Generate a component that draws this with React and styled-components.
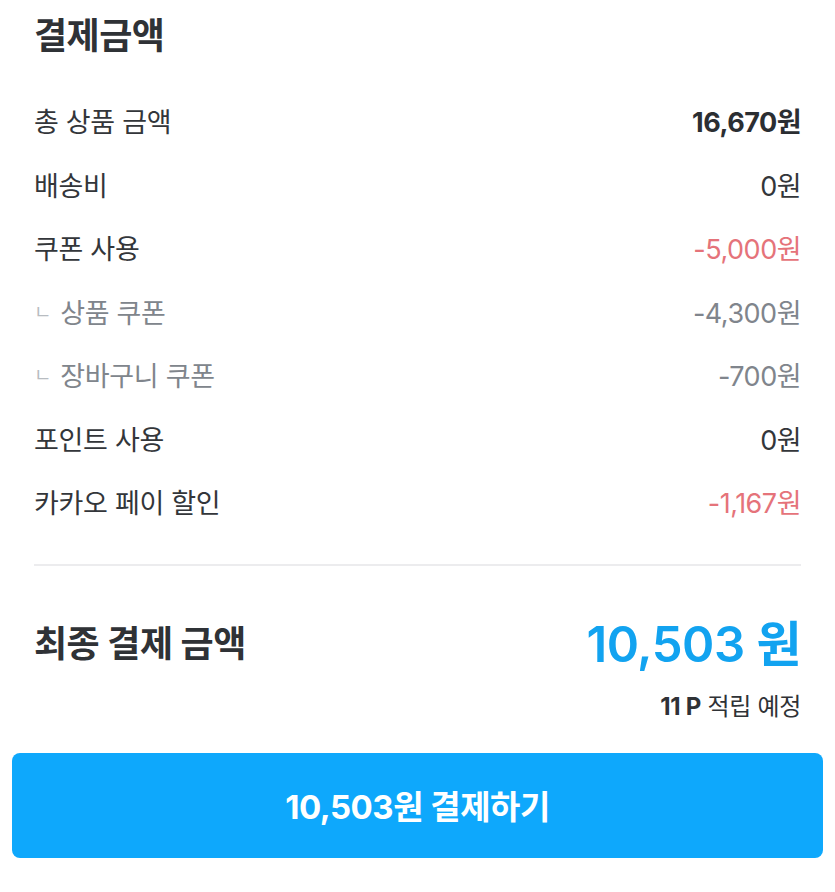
import React from 'react'
import styled, { createGlobalStyle } from 'styled-components'

const GlobalStyle = createGlobalStyle`
    body{
        margin:0;
        background:#fff;
        font-family:Inter,"Noto Sans CJK KR",sans-serif;
        -webkit-font-smoothing:antialiased;
    }
`

const rows = [
    { label: '총 상품 금액', value: '16,670원', tone: 'strong' },
    { label: '배송비', value: '0원' },
    { label: '쿠폰 사용', value: '-5,000원', tone: 'red' },
    { label: '상품 쿠폰', value: '-4,300원', sub: true },
    { label: '장바구니 쿠폰', value: '-700원', sub: true },
    { label: '포인트 사용', value: '0원' },
    { label: '카카오 페이 할인', value: '-1,167원', tone: 'red' },
]

const App = () => {
    return (
        <Page>
            <GlobalStyle />
            <Summary>
                <Title>결제금액</Title>
                <List>
                    {rows.map(r => (
                        <Row key={r.label}>
                            <Label sub={r.sub}>
                                {r.sub && <Corner>ㄴ</Corner>}
                                {r.label}
                            </Label>
                            <Value tone={r.sub ? 'sub' : r.tone}>{r.value}</Value>
                        </Row>
                    ))}
                </List>
                <Divider />
                <Total>
                    <TotalLabel>최종 결제 금액</TotalLabel>
                    <TotalValue>10,503 원</TotalValue>
                </Total>
                <Points><b>11 P</b> 적립 예정</Points>
            </Summary>
            <PayButton>10,503원 결제하기</PayButton>
        </Page>
    )
}

export default App

const Page=styled.div`
    width:835px;
    height:892px;
    box-sizing:border-box;
    padding:0 12px;
`
const Summary=styled.div`
    padding:0 22px;
`
const Title=styled.h2`
    margin:0;
    padding-top:12px;
    height:58px;
    line-height:48px;
    font-size:36px;
    font-weight:700;
    color:#2f3236;
    letter-spacing:-0.5px;
`
const List=styled.div`
    display:flex;
    flex-direction:column;
    padding-top:19px;
`
const Row=styled.div`
    display:flex;
    justify-content:space-between;
    align-items:center;
    height:63.5px;
`
const Label=styled.span`
    display:flex;
    align-items:center;
    font-size:27px;
    color:${p=>p.sub?'#80858c':'#33363a'};
    letter-spacing:-0.3px;
`
const Corner=styled.span`
    font-size:19px;
    color:#b8bcc1;
    margin-right:9px;
    position:relative;
    top:-1px;
`
const valueColors={strong:'#2b2e32',red:'#e5737a',sub:'#80858c'}
const Value=styled.span`
    font-size:27px;
    font-weight:${p=>p.tone==='strong'?700:400};
    color:${p=>valueColors[p.tone]||'#33363a'};
    letter-spacing:-0.5px;
`
const Divider=styled.hr`
    margin:30px 0 0;
    border:none;
    border-top:2px solid #ececee;
`
const Total=styled.div`
    display:flex;
    justify-content:space-between;
    align-items:center;
    height:118px;
    padding-top:32px;
    box-sizing:border-box;
`
const TotalLabel=styled.span`
    font-size:36px;
    font-weight:700;
    color:#2f3236;
    letter-spacing:-0.5px;
`
const TotalValue=styled.span`
    font-size:49px;
    font-weight:600;
    color:#12a3f0;
    letter-spacing:-0.5px;
`
const Points=styled.div`
    margin-top:8px;
    text-align:right;
    font-size:24px;
    color:#2f3236;
    letter-spacing:-0.3px;
    line-height:30px;
    b{font-weight:700;}
`
const PayButton=styled.button`
    display:flex;
    justify-content:center;
    align-items:center;
    width:100%;
    height:105px;
    margin-top:31px;
    border:none;
    border-radius:8px;
    background:#0ea8fc;
    color:#fff;
    font-family:inherit;
    font-size:33px;
    font-weight:700;
    letter-spacing:-0.5px;
`
